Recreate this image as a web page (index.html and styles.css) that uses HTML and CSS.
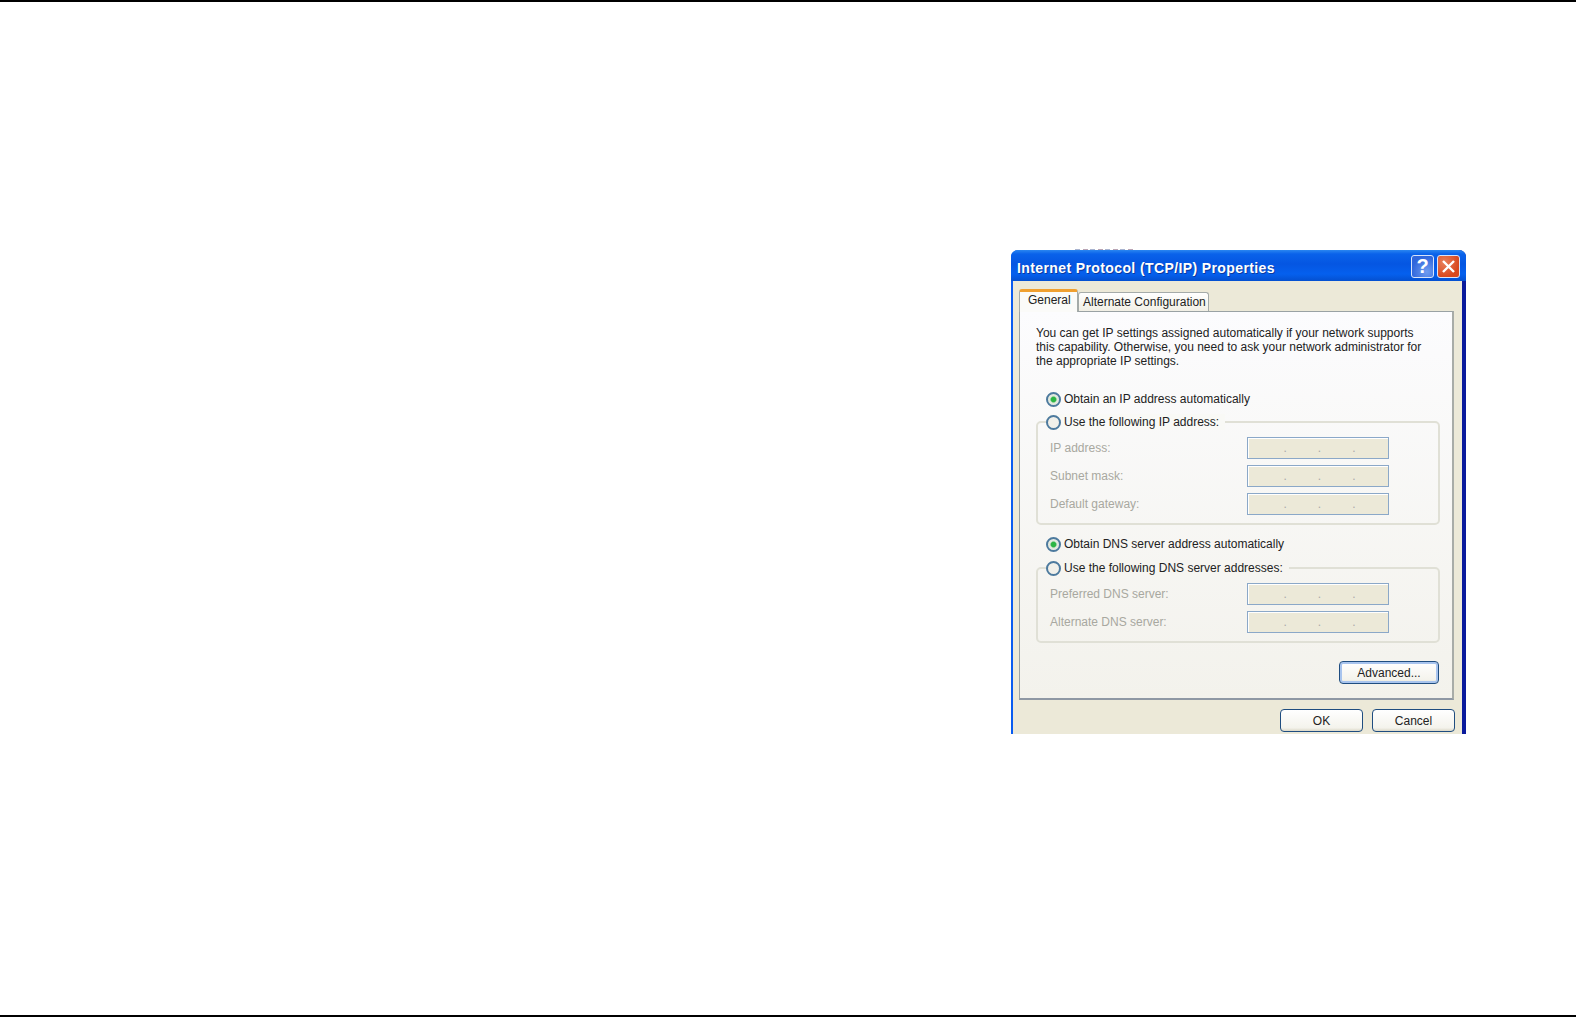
FILE: index.html
```html
<!DOCTYPE html>
<html lang="en">
<head>
    <meta charset="UTF-8">
    <title>Internet Protocol (TCP/IP) Properties</title>
    <link rel="stylesheet" href="styles.css">
</head>
<body>
    <div class="rule rule-top"></div>
    <div class="page">
        <div class="crop-marks"></div>
        <div class="dialog">
            <div class="titlebar">
                <span class="title">Internet Protocol (TCP/IP) Properties</span>
                <span class="tbtn help">?</span>
                <span class="tbtn close">
                    <svg width="15" height="15" viewBox="0 0 15 15"><path d="M2 2l11 11M13 2l-11 11" stroke="#fff" stroke-width="2.4" fill="none"/></svg>
                </span>
            </div>
            <div class="client">
                <div class="tabs">
                    <div class="tab active">General</div>
                    <div class="tab">Alternate Configuration</div>
                </div>
                <div class="panel">
                    <p class="intro">You can get IP settings assigned automatically if your network supports<br>this capability. Otherwise, you need to ask your network administrator for<br>the appropriate IP settings.</p>

                    <div class="radio-row first"><span class="radio on"></span>Obtain an IP address automatically</div>
                    <div class="group group-ip">
                        <div class="radio-row legend"><span class="radio"></span>Use the following IP address:</div>
                        <div class="field"><label>IP address:</label><div class="ip"><i>.</i><i>.</i><i>.</i></div></div>
                        <div class="field"><label>Subnet mask:</label><div class="ip"><i>.</i><i>.</i><i>.</i></div></div>
                        <div class="field"><label>Default gateway:</label><div class="ip"><i>.</i><i>.</i><i>.</i></div></div>
                    </div>

                    <div class="radio-row second"><span class="radio on"></span>Obtain DNS server address automatically</div>
                    <div class="group group-dns">
                        <div class="radio-row legend"><span class="radio"></span>Use the following DNS server addresses:</div>
                        <div class="field"><label>Preferred DNS server:</label><div class="ip"><i>.</i><i>.</i><i>.</i></div></div>
                        <div class="field"><label>Alternate DNS server:</label><div class="ip"><i>.</i><i>.</i><i>.</i></div></div>
                    </div>

                    <div class="panel-foot"><button class="btn default">Advanced...</button></div>
                </div>
                <div class="actions">
                    <button class="btn">OK</button>
                    <button class="btn">Cancel</button>
                </div>
            </div>
        </div>
    </div>
    <div class="rule rule-bottom"></div>
</body>
</html>
```

FILE: styles.css
```css
html, body {
    margin: 0;
    height: 100%;
    background: #fff;
}
body {
    display: flex;
    flex-direction: column;
    height: 1017px;
    overflow: hidden;
    font-family: "Liberation Sans", Arial, sans-serif;
    font-size: 12px;
    color: #222;
}
.rule {
    flex: none;
    background: #000;
}
.rule-top {
    height: 2px;
}
.rule-bottom {
    height: 2px;
}
.page {
    flex: 1;
    padding: 247px 0 0 1011px;
}
/* what is left of the line of text the dialog was cropped under */
.crop-marks {
    width: 58px;
    height: 1px;
    margin-left: 64px;
    background: repeating-linear-gradient(90deg, #a9b4d0 0, #a9b4d0 5px, #fff 5px, #fff 8px, #b9a4b4 8px, #b9a4b4 13px, #fff 13px, #fff 15px);
}

/* dialog */
.dialog {
    width: 455px;
    height: 484px;
    box-sizing: border-box;
    display: flex;
    flex-direction: column;
    border-radius: 7px 7px 0 0;
    background: linear-gradient(90deg, #0a5cf0 0, #0a5cf0 50%, #0a1a9c 50%);
    overflow: hidden;
}
.titlebar {
    flex: none;
    height: 31px;
    box-sizing: border-box;
    display: flex;
    align-items: center;
    padding: 2px 6px 0 6px;
    background: linear-gradient(#2a86f0 0, #0a62ea 4px, #0556e2 14px, #0560ee 24px, #0450d0 31px);
}
.title {
    flex: 1;
    padding-top: 2px;
    font-weight: bold;
    font-size: 14px;
    letter-spacing: 0.39px;
    color: #fff;
    white-space: nowrap;
    text-shadow: 1px 1px 0 #0a3aa0;
}
.tbtn {
    flex: none;
    width: 23px;
    height: 23px;
    margin-left: 3px;
    box-sizing: border-box;
    display: flex;
    align-items: center;
    justify-content: center;
    border: 1px solid #d8e4fa;
    border-radius: 3px;
    color: #fff;
}
.help {
    background: radial-gradient(circle at 70% 75%, #6f9cf0, #2f66dc 70%);
    font-size: 20px;
    font-weight: bold;
}
.close {
    background: radial-gradient(circle at 30% 30%, #e9805c, #d8481e 70%);
}
.client {
    flex: 1;
    margin: 0 4px 0 2px;
    padding: 8px 7px 0 6px;
    background: #ece9d8;
    display: flex;
    flex-direction: column;
}

/* tabs */
.tabs {
    flex: none;
    height: 22px;
    display: flex;
    align-items: flex-end;
    position: relative;
    z-index: 1;
}
.tab {
    height: 19px;
    box-sizing: border-box;
    padding: 2px 4px 0 4px;
    background: linear-gradient(#fff, #f1efe5);
    border: 1px solid #a5aba9;
    border-bottom: 0;
    border-radius: 3px 3px 0 0;
    white-space: nowrap;
    width: 131px;
}
.tab.active {
    height: 23px;
    width: 59px;
    margin-bottom: -1px;
    padding: 1px 0 0 8px;
    background: #fbfbf9;
    border-top: 3px solid #f0a030;
}

/* panel */
.panel {
    flex: none;
    width: 435px;
    height: 389px;
    box-sizing: border-box;
    padding: 14px 13px 0 16px;
    background: linear-gradient(#fcfcfe, #f3f2ec);
    border: 1px solid #9aa2a4;
    border-bottom: 2px solid #8f98a4;
    border-right: 2px solid #a8aca8;
}
.intro {
    margin: 0;
    line-height: 14px;
}
.radio-row {
    height: 16px;
    display: flex;
    align-items: center;
    white-space: nowrap;
}
.radio-row.first {
    margin: 23px 0 0 10px;
}
.radio-row.second {
    margin: 11px 0 0 10px;
}
.radio {
    flex: none;
    width: 15px;
    height: 15px;
    box-sizing: border-box;
    margin-right: 3px;
    border: 2px solid #4d7a9e;
    border-radius: 50%;
    background: #f1f0ea;
}
.radio.on {
    background: radial-gradient(circle, #2cb544 0, #2cb544 2.2px, #dfe8dc 3.6px, #f4f4ee 100%);
}

/* group boxes */
.group {
    position: relative;
    width: 404px;
    box-sizing: border-box;
    margin-top: 14px;
    padding: 14px 0 0 12px;
    border: 2px solid #e0e0d6;
    border-radius: 5px;
}
.group-ip {
    height: 104px;
}
.group-dns {
    height: 76px;
    margin-top: 15px;
}
.legend {
    position: absolute;
    top: -9px;
    left: 8px;
    padding-right: 6px;
    background: #f9f9f6;
}
.group-dns .legend {
    background: #f6f5f1;
}
.field {
    height: 28px;
    display: flex;
    align-items: flex-start;
    color: #a8a8a0;
}
.field label {
    width: 197px;
    flex: none;
    line-height: 22px;
}
.ip {
    width: 142px;
    height: 22px;
    box-sizing: border-box;
    display: flex;
    justify-content: center;
    gap: 31px;
    padding-left: 3px;
    border: 1px solid #8ba8c8;
    background: #ece9d8;
    box-shadow: inset 1px 1px 0 #fff;
}
.ip i {
    font-style: normal;
    line-height: 20px;
    color: #aaa;
}
.panel-foot {
    display: flex;
    justify-content: flex-end;
    margin: 18px 0 0 0;
}
.actions {
    display: flex;
    justify-content: flex-end;
    gap: 9px;
    margin-top: 9px;
}
.btn {
    width: 83px;
    height: 23px;
    padding: 0;
    border: 1px solid #1f4d80;
    border-radius: 4px;
    background: linear-gradient(#fff, #f4f3ec 85%, #dcd8c8);
    font-family: inherit;
    font-size: 12px;
    color: #222;
}
.btn.default {
    width: 100px;
    box-shadow: inset 0 0 0 2px #a8c4ee;
}
```
